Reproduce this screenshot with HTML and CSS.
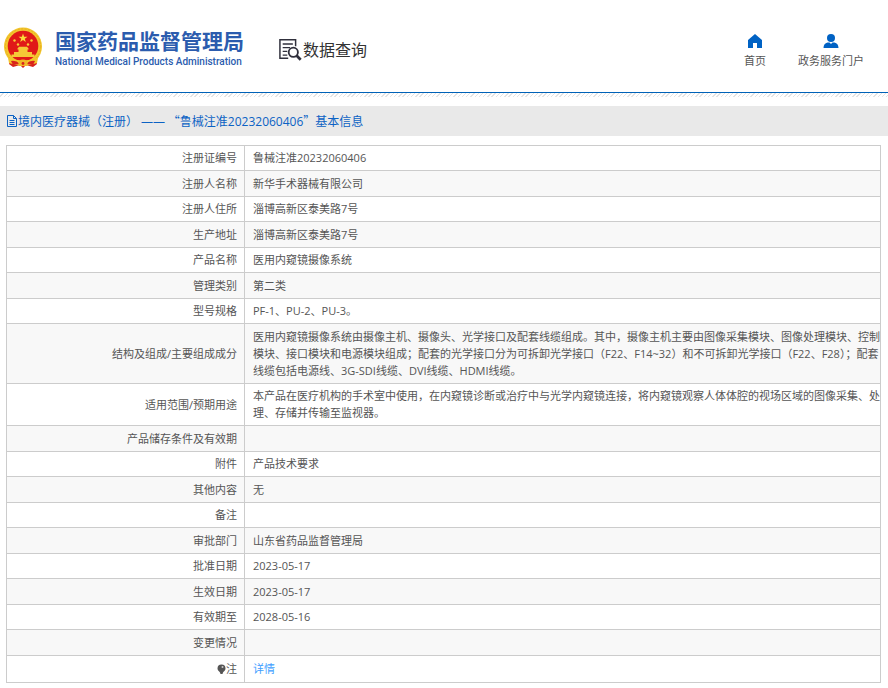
FILE: index.html
```html
<!DOCTYPE html>
<html lang="zh-CN">
<head>
<meta charset="utf-8">
<meta name="viewport" content="width=device-width, initial-scale=1">
<title>国家药品监督管理局 数据查询</title>
<link rel="stylesheet" href="styles.css">
</head>
<body>
<header class="site-header">
  <div class="brand">
    <svg class="emblem" viewBox="0 0 40 42" aria-hidden="true">
      <path d="M8 31 L6 37 L10 40 L17 38 L20 41 L23 38 L30 40 L34 37 L32 31Z" fill="#d8231c"/>
      <circle cx="20" cy="19.500" r="19" fill="#f3c62c"/>
      <circle cx="20" cy="19.500" r="17.600" fill="none" stroke="#e5ad22" stroke-width="1" stroke-dasharray="2 1.500"/>
      <circle cx="20" cy="19" r="15.300" fill="#e01918"/>
      <path d="M20 6.500l1.100 3.200h3.400l-2.700 2 1 3.200-2.800-1.900-2.800 1.900 1-3.200-2.700-2h3.400z" fill="#fbdc3a"/>
      <g fill="#f8cf36"><circle cx="11.500" cy="13.500" r="1.200"/><circle cx="28.500" cy="13.500" r="1.200"/><circle cx="15" cy="17.500" r="1.200"/><circle cx="25" cy="17.500" r="1.200"/></g>
      <path d="M14.500 21.500l1.500-1.800h8l1.500 1.800v1h-11zM15.500 22.500h9v2.500h-9zM11 25h18v2.500h2.500V30h-23v-2.500H11z" fill="#f5c936"/>
      <path d="M5 31 Q20 36 35 31 L34 36 Q20 41 6 36Z" fill="#f3c62c"/>
      <path d="M8 34 Q13 33 17 37 L10 38ZM32 34 Q27 33 23 37 L30 38Z" fill="#d8231c"/>
      <path d="M15.500 36a4.500 3.500 0 0 1 9 0v3h-9z" fill="#f0b928"/>
      <circle cx="20" cy="36.500" r="1.400" fill="#d8231c"/>
    </svg>
    <div class="brand-text">
      <div class="brand-cn">国家药品监督管理局</div>
      <div class="brand-en">National Medical Products Administration</div>
    </div>
  </div>
  <div class="section-name">
    <svg class="section-icon" viewBox="0 0 26 24" aria-hidden="true" fill="none" stroke="#30303c">
      <path d="M18 8V1H1v20h9" stroke-width="1.600"/>
      <path d="M4 5.500h11M4 9.500h8M4 13.500h5M4 17.500h5" stroke-width="1.400"/>
      <circle cx="15.500" cy="14.500" r="5" stroke-width="2"/>
      <path d="M19 18l4.500 4.500" stroke-width="3"/>
    </svg>
    <span>数据查询</span>
  </div>
  <nav class="top-nav">
    <a href="#home">
      <svg viewBox="0 0 16 16" aria-hidden="true"><path d="M8 1L1 7v8h5v-5h4v5h5V7z"/></svg>
      <span>首页</span>
    </a>
    <a href="#portal">
      <svg viewBox="0 0 16 16" aria-hidden="true"><circle cx="8" cy="5" r="4"/><path d="M4.500 9.500h2L8 11l1.500-1.500h2c2.500.5 4 2.500 4 5.500H.5c0-3 1.500-5 4-5.500z"/></svg>
      <span>政务服务门户</span>
    </a>
  </nav>
</header>
<div class="hatch"></div>
<main>
  <h1 class="page-title">
    <svg viewBox="0 0 12 12" aria-hidden="true" fill="none" stroke="currentColor"><path d="M1.500.500h6l3 3v8h-9zM7.500.500v3h3M3.500 5.500h5M3.500 7.500h5M3.500 9.500h5"/></svg>
    <span>境内医疗器械（注册） ——<span class="quote"> “</span>鲁械注准20232060406<span class="quote">”</span>基本信息</span>
  </h1>
  <table class="details">
    <tbody>
      <tr><th scope="row">注册证编号</th><td>鲁械注准20232060406</td></tr>
      <tr><th scope="row">注册人名称</th><td>新华手术器械有限公司</td></tr>
      <tr><th scope="row">注册人住所</th><td>淄博高新区泰美路7号</td></tr>
      <tr><th scope="row">生产地址</th><td>淄博高新区泰美路7号</td></tr>
      <tr><th scope="row">产品名称</th><td>医用内窥镜摄像系统</td></tr>
      <tr><th scope="row">管理类别</th><td>第二类</td></tr>
      <tr><th scope="row">型号规格</th><td>PF-1、PU-2、PU-3。</td></tr>
      <tr><th scope="row">结构及组成/主要组成成分</th><td>医用内窥镜摄像系统由摄像主机、摄像头、光学接口及配套线缆组成。其中，摄像主机主要由图像采集模块、图像处理模块、控制模块、接口模块和电源模块组成；配套的光学接口分为可拆卸光学接口（F22、F14~32）和不可拆卸光学接口（F22、F28）；配套线缆包括电源线、3G-SDI线缆、DVI线缆、HDMI线缆。</td></tr>
      <tr><th scope="row">适用范围/预期用途</th><td>本产品在医疗机构的手术室中使用，在内窥镜诊断或治疗中与光学内窥镜连接，将内窥镜观察人体体腔的视场区域的图像采集、处理、存储并传输至监视器。</td></tr>
      <tr><th scope="row">产品储存条件及有效期</th><td></td></tr>
      <tr><th scope="row">附件</th><td>产品技术要求</td></tr>
      <tr><th scope="row">其他内容</th><td>无</td></tr>
      <tr><th scope="row">备注</th><td></td></tr>
      <tr><th scope="row">审批部门</th><td>山东省药品监督管理局</td></tr>
      <tr><th scope="row">批准日期</th><td>2023-05-17</td></tr>
      <tr><th scope="row">生效日期</th><td>2023-05-17</td></tr>
      <tr><th scope="row">有效期至</th><td>2028-05-16</td></tr>
      <tr><th scope="row">变更情况</th><td></td></tr>
      <tr><th scope="row"><svg class="note-icon" viewBox="0 0 9 10" aria-hidden="true"><path d="M4.500.500a4 4 0 0 1 4 4c0 2-1.500 2.500-2.500 4L5.500 10h-2L3 8.500C2 7 .5 6.500.500 4.500a4 4 0 0 1 4-4z" fill="#555"/><circle cx="5.500" cy="3" r="1" fill="#ccc"/></svg>注</th><td><a href="#detail">详情</a></td></tr>
    </tbody>
  </table>
</main>
</body>
</html>
```
FILE: styles.css
```css
* {
  box-sizing: border-box;
}

body {
  margin: 0;
  background: #fff;
  color: #555;
  font-family: "Open Sans", "Noto Sans CJK SC", sans-serif;
  font-size: 11px;
  line-height: 17px;
}

a {
  color: #409eff;
  text-decoration: none;
}

.site-header {
  display: flex;
  align-items: center;
  height: 93px;
  padding: 4px 24px 0 3px;
  border-bottom: 1px solid #0062b8;
}

.brand {
  display: flex;
  align-items: center;
  gap: 12px;
}

.emblem {
  width: 40px;
  height: 42px;
}

.brand-text {
  padding-top: 4px;
  color: #2b5cae;
  white-space: nowrap;
}

.brand-cn {
  font-size: 21px;
  font-weight: 700;
  line-height: 24px;
}

.brand-en {
  font-family: Roboto, sans-serif;
  font-size: 10px;
  font-weight: 500;
  line-height: 18px;
}

.section-name {
  display: flex;
  align-items: center;
  margin-left: 35px;
  padding-top: 4px;
  color: #333;
  font-size: 16px;
  line-height: 24px;
  white-space: nowrap;
}

.section-icon {
  width: 24px;
  height: 24px;
}

.top-nav {
  display: flex;
  gap: 32px;
  margin-left: auto;
  padding-top: 6px;
}

.top-nav a {
  display: flex;
  flex-direction: column;
  align-items: center;
  gap: 3px;
  color: #555;
  white-space: nowrap;
}

.top-nav svg {
  width: 16px;
  height: 16px;
  fill: #0062c4;
}

.hatch {
  height: 4px;
  background: repeating-linear-gradient(135deg, #fff 0 2px, #e4e4e4 2px 3px);
}

.page-title {
  display: flex;
  align-items: center;
  height: 30px;
  margin: 9px 0;
  padding-left: 6px;
  background: #e9e9e9;
  color: #0b62c4;
  font-size: 12px;
  font-weight: 400;
}

.page-title svg {
  width: 12px;
  height: 12px;
}

.quote {
  font-family: "Noto Sans CJK SC", sans-serif;
}

main {
  padding-bottom: 4px;
}

.details {
  width: calc(100% - 13px);
  margin: 0 7px 0 6px;
  border-collapse: collapse;
  table-layout: fixed;
}

.details th,
.details td {
  height: 25px;
  padding: 3px 0 4px 8px;
  border: 1px solid #ccc;
  text-align: left;
  vertical-align: middle;
}

.details th {
  width: 238px;
  padding-right: 7px;
  font-weight: 400;
  text-align: right;
}

.details tr:nth-child(even) {
  background: #f8f8f8;
}

.details tr:nth-child(even) > * {
  height: 26px;
  padding-top: 4px;
}

.details tr:last-child > * {
  height: 27px;
}

.note-icon {
  width: 9px;
  height: 10px;
  vertical-align: -1px;
}
```
